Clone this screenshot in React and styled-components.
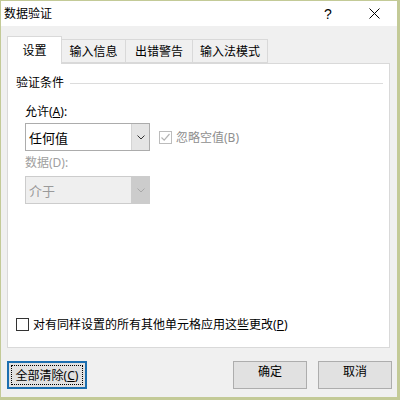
import React from "react";
import styled, { createGlobalStyle } from "styled-components";

const GlobalStyle = createGlobalStyle`
  html, body {
    margin: 0;
    padding: 0;
    background: #ffffff;
  }
`;

const Window = styled.div`
  width: 400px;
  height: 400px;
  box-sizing: border-box;
  border: 1px solid #c3ca97;
  border-right-width: 3px;
  border-bottom-width: 3px;
  background: #f0f0f0;
  display: flex;
  flex-direction: column;
  font-family: "Noto Sans", "Noto Sans CJK SC", sans-serif;
  font-size: 12px;
  color: #000000;
`;

const TitleBar = styled.div`
  height: 25px;
  background: #ffffff;
  display: flex;
  align-items: center;
  padding-left: 3px;
`;

const Title = styled.span`
  flex: 1;
  font-size: 12px;
  line-height: 25px;
`;

const TitleButton = styled.div`
  width: 46px;
  height: 25px;
  display: flex;
  align-items: center;
  justify-content: center;
  font-family: "Liberation Sans", sans-serif;
  font-size: 14px;
`;

const Body = styled.div`
  padding: 10px 7px 0 6px;
  display: flex;
  flex-direction: column;
`;

const TabStrip = styled.div`
  display: flex;
  align-items: flex-end;
  height: 27px;
`;

const Tab = styled.div`
  box-sizing: border-box;
  height: ${(p) => (p.active ? "28px" : "24px")};
  margin-bottom: ${(p) => (p.active ? "-1px" : "0")};
  width: ${(p) => p.w}px;
  background: ${(p) => (p.active ? "#ffffff" : "#f0f0f0")};
  border: 1px solid #d9d9d9;
  border-bottom: ${(p) => (p.active ? "none" : "1px solid #d9d9d9")};
  border-left: ${(p) => (p.first || p.active ? "1px solid #d9d9d9" : "none")};
  display: flex;
  align-items: center;
  justify-content: center;
  position: relative;
  z-index: ${(p) => (p.active ? 1 : 0)};
  padding-bottom: ${(p) => (p.active ? "2px" : "0")};
`;

const Panel = styled.div`
  box-sizing: border-box;
  height: 285px;
  background: #ffffff;
  border: 1px solid #d9d9d9;
  display: flex;
  flex-direction: column;
  padding: 0 6px 0 8px;
`;

const GroupHeader = styled.div`
  margin-top: 11px;
  display: flex;
  align-items: center;
  gap: 6px;
  line-height: 16px;
`;

const GroupLine = styled.div`
  flex: 1;
  height: 1px;
  background: #dcdcdc;
`;

const Field = styled.div`
  padding-left: 9px;
  display: flex;
  flex-direction: column;
`;

const Label = styled.div`
  line-height: 16px;
  margin-top: ${(p) => p.mt}px;
  color: ${(p) => (p.disabled ? "#a0a0a0" : "#000000")};
`;

const SelectRow = styled.div`
  display: flex;
  align-items: center;
  margin-top: ${(p) => p.mt}px;
`;

const Select = styled.div`
  box-sizing: border-box;
  width: 125px;
  height: 28px;
  display: flex;
  border: 1px solid ${(p) => (p.disabled ? "#cccccc" : "#acacac")};
  background: ${(p) => (p.disabled ? "#efefef" : "#ffffff")};
  color: ${(p) => (p.disabled ? "#9a9a9a" : "#000000")};
`;

const SelectValue = styled.div`
  flex: 1;
  display: flex;
  align-items: center;
  padding-left: 3px;
  font-size: 13px;
`;

const SelectArrow = styled.div`
  width: 17px;
  display: flex;
  align-items: center;
  justify-content: center;
  background: ${(p) => (p.disabled ? "#cccccc" : "#e5e5e5")};
  border-left: 1px solid ${(p) => (p.disabled ? "#cccccc" : "#d4d4d4")};
`;

const CheckLabel = styled.label`
  display: flex;
  align-items: center;
  gap: 4px;
  color: ${(p) => (p.disabled ? "#8f8f8f" : "#000000")};
  margin-left: ${(p) => p.ml || 0}px;
`;

const Box = styled.span`
  box-sizing: border-box;
  width: 13px;
  height: 13px;
  border: 1px solid ${(p) => (p.disabled ? "#bcbcbc" : "#333333")};
  background: #ffffff;
  display: flex;
  align-items: center;
  justify-content: center;
`;

const BottomCheck = styled.div`
  margin-top: auto;
  margin-bottom: 14px;
`;

const Footer = styled.div`
  display: flex;
  margin-top: 13px;
  margin-right: -2px;
  gap: 11px;
`;

const Button = styled.button`
  box-sizing: border-box;
  height: 28px;
  width: ${(p) => p.w}px;
  margin-left: ${(p) => (p.push ? "auto" : "0")};
  background: #e1e1e1;
  border: ${(p) => (p.focused ? "2px solid #1c6fb0" : "1px solid #adadad")};
  font-family: inherit;
  font-size: 12px;
  color: #000000;
  padding: ${(p) => (p.focused ? "2px" : "0")};
  display: flex;
  align-items: stretch;
  justify-content: center;
`;

const FocusRect = styled.span`
  flex: 1;
  border: 1px dotted #000000;
  display: flex;
  align-items: center;
  justify-content: center;
`;

const Chevron = ({ color }) => (
  <svg width="8" height="5" viewBox="0 0 8 5">
    <path d="M0.5 0.5 L4 4 L7.5 0.5" fill="none" stroke={color} strokeWidth="1" />
  </svg>
);

const Check = () => (
  <svg width="11" height="11" viewBox="0 0 11 11">
    <path d="M1.5 5.5 L4.2 8.2 L9.5 2" fill="none" stroke="#b5b5b5" strokeWidth="1.2" />
  </svg>
);

const Close = () => (
  <svg width="11" height="11" viewBox="0 0 11 11">
    <path d="M0.5 0.5 L10.5 10.5 M10.5 0.5 L0.5 10.5" stroke="#000000" strokeWidth="1" />
  </svg>
);

const tabs = [
  { name: "设置", w: 55 },
  { name: "输入信息", w: 64 },
  { name: "出错警告", w: 67 },
  { name: "输入法模式", w: 75 },
];

export default function App() {
  return (
    <>
      <GlobalStyle />
      <Window>
        <TitleBar>
          <Title>数据验证</Title>
          <TitleButton>?</TitleButton>
          <TitleButton>
            <Close />
          </TitleButton>
        </TitleBar>
        <Body>
          <TabStrip>
            {tabs.map((t, i) => (
              <Tab key={t.name} w={t.w} active={i === 0} first={i === 0}>
                {t.name}
              </Tab>
            ))}
          </TabStrip>
          <Panel>
            <GroupHeader>
              验证条件
              <GroupLine />
            </GroupHeader>
            <Field>
              <Label mt={13}>
                允许(<u>A</u>):
              </Label>
              <SelectRow mt={3}>
                <Select>
                  <SelectValue>任何值</SelectValue>
                  <SelectArrow>
                    <Chevron color="#333333" />
                  </SelectArrow>
                </Select>
                <CheckLabel disabled ml={9}>
                  <Box disabled>
                    <Check />
                  </Box>
                  <span>忽略空值(B)</span>
                </CheckLabel>
              </SelectRow>
              <Label mt={4} disabled>
                数据(D):
              </Label>
              <SelectRow mt={5}>
                <Select disabled>
                  <SelectValue>介于</SelectValue>
                  <SelectArrow disabled>
                    <Chevron color="#a8a8a8" />
                  </SelectArrow>
                </Select>
              </SelectRow>
            </Field>
            <BottomCheck>
              <CheckLabel>
                <Box />
                <span>
                  对有同样设置的所有其他单元格应用这些更改(<u>P</u>)
                </span>
              </CheckLabel>
            </BottomCheck>
          </Panel>
          <Footer>
            <Button w={80} focused>
              <FocusRect>
                <span>
                  全部清除(<u>C</u>)
                </span>
              </FocusRect>
            </Button>
            <Button w={74} push>
              确定
            </Button>
            <Button w={74}>取消</Button>
          </Footer>
        </Body>
      </Window>
    </>
  );
}
